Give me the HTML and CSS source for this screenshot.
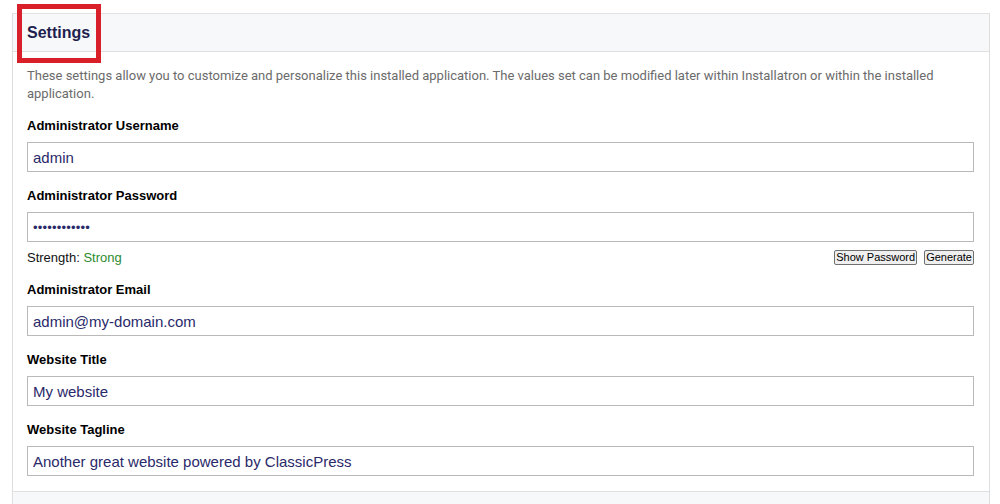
FILE: index.html
```html
<!DOCTYPE html>
<html>
<head>
<meta charset="utf-8">
<link rel="stylesheet" href="styles.css">
</head>
<body>
<div class="page">
  <div class="panel">
    <div class="panel-head">
      <h2 class="title">Settings</h2>
      <div class="highlight"></div>
    </div>
    <div class="panel-body">
      <p class="desc">These settings allow you to customize and personalize this installed application. The values set can be modified later within Installatron or within the installed application.</p>

      <div class="field">
        <label class="label">Administrator Username</label>
        <input class="input" type="text" value="admin">
      </div>

      <div class="field field-pw">
        <label class="label">Administrator Password</label>
        <input class="input pw" type="text" value="••••••••••••">
        <div class="pw-row">
          <span class="strength">Strength: <span class="strong">Strong</span></span>
          <span class="pw-buttons">
            <button class="btn" type="button">Show Password</button>
            <button class="btn" type="button">Generate</button>
          </span>
        </div>
      </div>

      <div class="field">
        <label class="label">Administrator Email</label>
        <input class="input" type="text" value="admin@my-domain.com">
      </div>

      <div class="field">
        <label class="label">Website Title</label>
        <input class="input" type="text" value="My website">
      </div>

      <div class="field">
        <label class="label">Website Tagline</label>
        <input class="input" type="text" value="Another great website powered by ClassicPress">
      </div>
    </div>
    <div class="panel-foot"></div>
  </div>
</div>
</body>
</html>
```

FILE: styles.css
```css
html, body {
  margin: 0;
  padding: 0;
  background: #ffffff;
}
body {
  font-family: "Liberation Sans", Arial, sans-serif;
  color: #000;
  width: 1000px;
  height: 504px;
  overflow: hidden;
}
.page {
  padding: 13px 10px 0 12px;
}
.panel {
  border-left: 1px solid #dedede;
  border-right: 1px solid #dedede;
  border-top: 1px solid #e2e2e2;
  width: 976px;
}
.panel-head {
  position: relative;
  background: #f7f8fa;
  border-bottom: 1px solid #dfdfdf;
  height: 37px;
  display: flex;
  align-items: center;
  padding-left: 14px;
}
.title {
  margin: 0;
  font-size: 16px;
  font-weight: bold;
  color: #1f1f4f;
  font-family: "Liberation Sans", Arial, sans-serif;
}
.highlight {
  position: absolute;
  left: 4px;
  top: -10px;
  width: 74px;
  height: 49px;
  border: 5px solid #d9202a;
}
.panel-body {
  padding: 14px 14px 0 14px;
}
.desc {
  margin: 0 0 14px 0;
  padding-top: 1px;
  font-family: Roboto, "Liberation Sans", sans-serif;
  font-size: 13px;
  line-height: 18px;
  color: #6b6b6b;
}
.field {
  display: flex;
  flex-direction: column;
  margin-bottom: 15px;
}
.label {
  font-size: 13px;
  font-weight: bold;
  line-height: 18px;
  margin-bottom: 7px;
  color: #000;
}
.input {
  box-sizing: border-box;
  height: 30px;
  width: 947px;
  margin: 0;
  border: 1px solid #b9b9b9;
  padding: 0 5px;
  font-family: "Liberation Sans", Arial, sans-serif;
  font-size: 15px;
  color: #2a2a6a;
  background: #fff;
  outline: none;
}
.pw {
  font-size: 13px;
  letter-spacing: 0.2px;
}
.pw-row {
  display: flex;
  justify-content: space-between;
  align-items: center;
  margin-top: 6px;
  height: 18px;
}
.strength {
  font-size: 13px;
  color: #111;
}
.strong {
  color: #2e8b2e;
}
.pw-buttons {
  display: flex;
  gap: 7px;
  margin-right: 1px;
}
.btn {
  font-family: "Liberation Sans", Arial, sans-serif;
  font-size: 11px;
  line-height: 12px;
  padding: 0 1px;
  height: 15px;
  border: 1px solid #707070;
  border-radius: 2px;
  background: #efefef;
  color: #000;
}
.panel-foot {
  border-top: 1px solid #dfdfdf;
  background: #f7f8fa;
  height: 20px;
}
```
